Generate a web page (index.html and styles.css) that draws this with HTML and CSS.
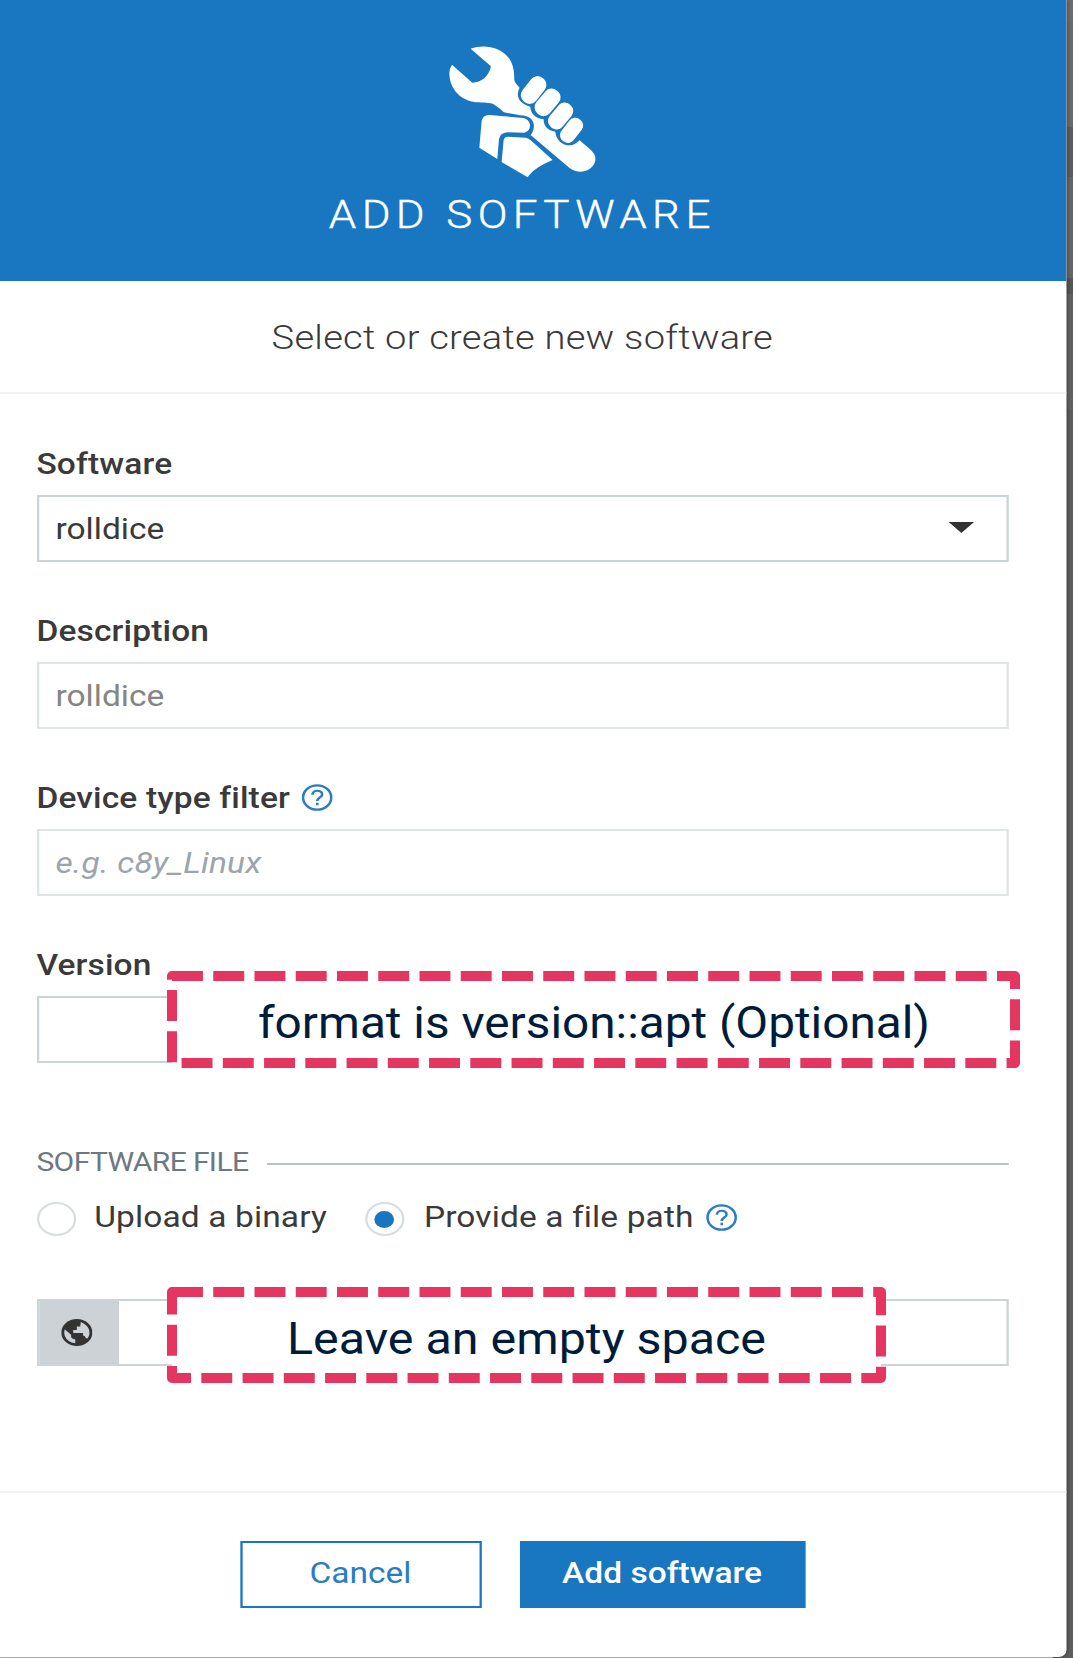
FILE: index.html
```html
<!DOCTYPE html>
<html lang="en">
<head>
<meta charset="utf-8">
<title>Add software</title>
<link rel="stylesheet" href="styles.css">
</head>
<body>
<div class="backdrop"></div>
<main class="dialog">
  <header class="dialog-header">
    <svg class="tool-icon" viewBox="54 48 444 396" preserveAspectRatio="none" fill="#fff">
      <path d="M121 56C160 42 207 50 232 80C248 99 252 120 252 150Q252 157 268 173C258 194 262 210 281 222Q292 229 300 230C301 251 315 265 340 268C340 289 353 302 375 305C378 334 402 350 427 345Q438 341 448 331L482 360C498 375 500 392 487 409C472 429 438 430 418 414L301 315C313 300 315 280 302 266Q291 257 270 256L221 247Q203 231 190 223C178 217 160 219 137 217C93 212 58 180 57 130Q57 115 65 104L126 158C153 158 176 139 182 109Z"/>
      <rect x="-26" y="-45" width="52" height="90" rx="24" transform="translate(310 180) rotate(38)"/>
      <rect x="-26" y="-45" width="52" height="90" rx="24" transform="translate(352 217) rotate(40)"/>
      <rect x="-25" y="-44" width="50" height="88" rx="23" transform="translate(391 258) rotate(40)"/>
      <rect x="-23" y="-41" width="46" height="82" rx="21" transform="translate(424 301) rotate(38)"/>
      <path d="M177 255L280 264C304 270 306 302 283 308L231 307Q209 309 206 328L201 387L147 353L154 273Q158 254 177 255Z"/>
      <path d="M233 320L286 323Q294 324 304 333L367 390Q317 411 299 433L292 442L214 396L220 330Q222 320 233 320Z"/>
    </svg>
    <h1 class="dialog-title">ADD SOFTWARE</h1>
  </header>
  <p class="subtitle">Select or create new software</p>
  <form class="form">
    <div class="field">
      <div class="label">Software</div>
      <div class="input select"><span>rolldice</span>
        <svg class="caret" viewBox="0 0 22 11"><path d="M0 0H22L11 11Z" fill="#333"/></svg>
      </div>
    </div>
    <div class="field">
      <div class="label">Description</div>
      <div class="input disabled">rolldice</div>
    </div>
    <div class="field">
      <div class="label">Device type filter
        <svg class="help" viewBox="0 0 27 27" fill="none" stroke="#2a7cc4" stroke-width="2.2"><circle cx="13.5" cy="13.5" r="12.2"/><path d="M9.4 10.8C9.4 5.4 17.8 5.5 17.8 10.4C17.8 13.5 13.6 13.5 13.6 17.1M13.6 18.8V21.3"/></svg>
      </div>
      <div class="input placeholder">e.g. c8y_Linux</div>
    </div>
    <div class="field">
      <div class="label">Version</div>
      <div class="input"></div>
    </div>
    <div class="legend">SOFTWARE FILE</div>
    <div class="radios">
      <span class="radio"></span><span class="radio-text first">Upload a binary</span>
      <span class="radio checked"></span><span class="radio-text">Provide a file path</span>
      <svg class="help" viewBox="0 0 27 27" fill="none" stroke="#2a7cc4" stroke-width="2.2"><circle cx="13.5" cy="13.5" r="12.2"/><path d="M9.4 10.8C9.4 5.4 17.8 5.5 17.8 10.4C17.8 13.5 13.6 13.5 13.6 17.1M13.6 18.8V21.3"/></svg>
    </div>
    <div class="input path">
      <span class="prefix">
        <svg class="globe" viewBox="0 0 20 20"><circle cx="10" cy="10" r="10" fill="#333"/><path fill="#cdd2d6" d="M12.5 2.3Q16 3.8 17.6 7.2Q18.8 11 17 14.3L15.8 14.2Q15.4 12.4 14 12.2V10.3H7.7V8.2H10V5.6H12.2ZM2.2 7.6L6.3 11.7V13.2Q6.6 14.8 9 15.2V18Q4 17.3 2.3 12.6Q1.6 10 2.2 7.6Z"/></svg>
      </span>
    </div>
  </form>
  <footer class="actions">
    <div class="button">Cancel</div>
    <div class="button primary">Add software</div>
  </footer>
</main>
<svg class="note note-version" viewBox="0 0 853 97">
  <rect class="note-box" x="5" y="5" width="843" height="87"/>
  <text x="91" y="66.5" textLength="672" lengthAdjust="spacingAndGlyphs">format is version::apt (Optional)</text>
</svg>
<svg class="note note-path" viewBox="0 0 719 96">
  <rect class="note-box" x="5" y="5" width="709" height="86"/>
  <text x="120" y="67" textLength="479" lengthAdjust="spacingAndGlyphs">Leave an empty space</text>
</svg>
</body>
</html>
```
FILE: styles.css
```css
* { box-sizing: border-box; }
body {
  margin: 0;
  width: 1073px;
  height: 1658px;
  position: relative;
  overflow: hidden;
  background: #d0d0d0;
  font-family: Roboto, "Liberation Sans", sans-serif;
  color: #3a3a3a;
}
.backdrop {
  position: absolute;
  top: 0;
  right: 0;
  width: 20px;
  height: 1658px;
  background: linear-gradient(#716b68 0 22px, #6c6966 22px 127px, #5e5c5a 127px 177px, #676462 177px 278px, #565656 278px 294px, #616161 294px 409px, #5d5d5d 409px);
}
/* The dialog is laid out 923px wide and widened to 1066px. */
.dialog {
  position: relative;
  width: 923px;
  height: 1657px;
  transform: scaleX(1.1555);
  transform-origin: 0 0;
  background: #fff;
  border-radius: 0 0 7px 0;
  box-shadow: 0 0 3px rgba(0, 0, 0, .5);
  overflow: hidden;
}
.dialog-header {
  height: 281px;
  padding: 46px 19px 0 0;
  background: #1976c0;
  color: #fff;
  display: flex;
  flex-direction: column;
  align-items: center;
}
.tool-icon { width: 128px; height: 132px; display: block; }
.dialog-title {
  margin: 15px 0 0;
  font-size: 38px;
  line-height: 44px;
  font-weight: 300;
  letter-spacing: 4.7px;
  -webkit-text-stroke: .4px #fff;
}
.subtitle {
  margin: 0;
  height: 113px;
  padding: 37px 19px 0 0;
  border-bottom: 2px solid #f2f2f3;
  text-align: center;
  font-size: 33px;
  line-height: 39px;
  font-weight: 300;
  letter-spacing: .2px;
}
.form {
  height: 1097px;
  padding: 46px 50.5px 0 31.5px;
  display: flex;
  flex-direction: column;
}
.field { height: 167px; }
.label {
  height: 55px;
  display: flex;
  align-items: center;
  gap: 10px;
  padding-bottom: 8px;
  font-size: 29px;
  font-weight: 500;
  letter-spacing: .12px;
}
.input {
  height: 67px;
  border: 2px solid #cdd4d8;
  padding: 0 14.5px;
  display: flex;
  align-items: center;
  font-size: 29px;
}
.select { justify-content: space-between; padding-right: 28px; }
.caret { width: 22px; height: 11px; margin-top: -3px; }
.disabled { border-color: #dfe4e6; color: #858585; }
.placeholder { border-color: #dfe4e6; color: #9ca5ab; font-style: italic; letter-spacing: .15px; }
.help { width: 27px; height: 27px; }
.legend {
  margin-top: 39px;
  height: 30px;
  display: flex;
  align-items: center;
  gap: 16px;
  font-size: 26px;
  letter-spacing: -.55px;
  color: #6d7880;
}
.legend::after { content: ""; flex: 1; height: 2px; background: #b9c1c6; margin-top: 3px; }
.radios {
  margin-top: 25px;
  height: 34px;
  display: flex;
  align-items: center;
  font-size: 29px;
  letter-spacing: .1px;
}
.radio {
  width: 34px;
  height: 34px;
  border: 2px solid #d8dde0;
  border-radius: 50%;
  display: flex;
  align-items: center;
  justify-content: center;
}
.checked::after { content: ""; width: 17px; height: 17px; border-radius: 50%; background: #1776bf; }
.radio-text { margin: -4px 11px 0 16px; }
.radio-text.first { margin-right: 33px; }
.checked + .radio-text { margin-left: 17px; }
.radios .help { margin-top: -4px; }
.path { margin-top: 63px; padding: 0; }
.prefix {
  width: 69px;
  height: 100%;
  background: #cdd2d6;
  display: flex;
  align-items: center;
  justify-content: center;
}
.globe { width: 27px; height: 27px; margin-right: 3px; }
.actions {
  height: 166px;
  padding: 48px 19px 0 0;
  border-top: 2px solid #f2f2f3;
  display: flex;
  justify-content: center;
  gap: 33px;
}
.button {
  width: 209px;
  height: 67px;
  border: 2px solid #1976c0;
  color: #2a7cc4;
  font-size: 29px;
  line-height: 60px;
  text-align: center;
}
.button.primary { width: 247px; background: #1976c0; color: #fff; font-weight: 500; }
.note {
  position: absolute;
  font-family: Roboto, sans-serif;
  font-size: 44.5px;
  fill: #001c3b;
}
.note-version { left: 167px; top: 971px; width: 853px; height: 97px; }
.note-path { left: 167px; top: 1287px; width: 719px; height: 96px; }
.note-box {
  fill: #fff;
  stroke: #e53561;
  stroke-width: 10;
  stroke-linejoin: round;
  stroke-dasharray: 30.94 10.31;
}
```
